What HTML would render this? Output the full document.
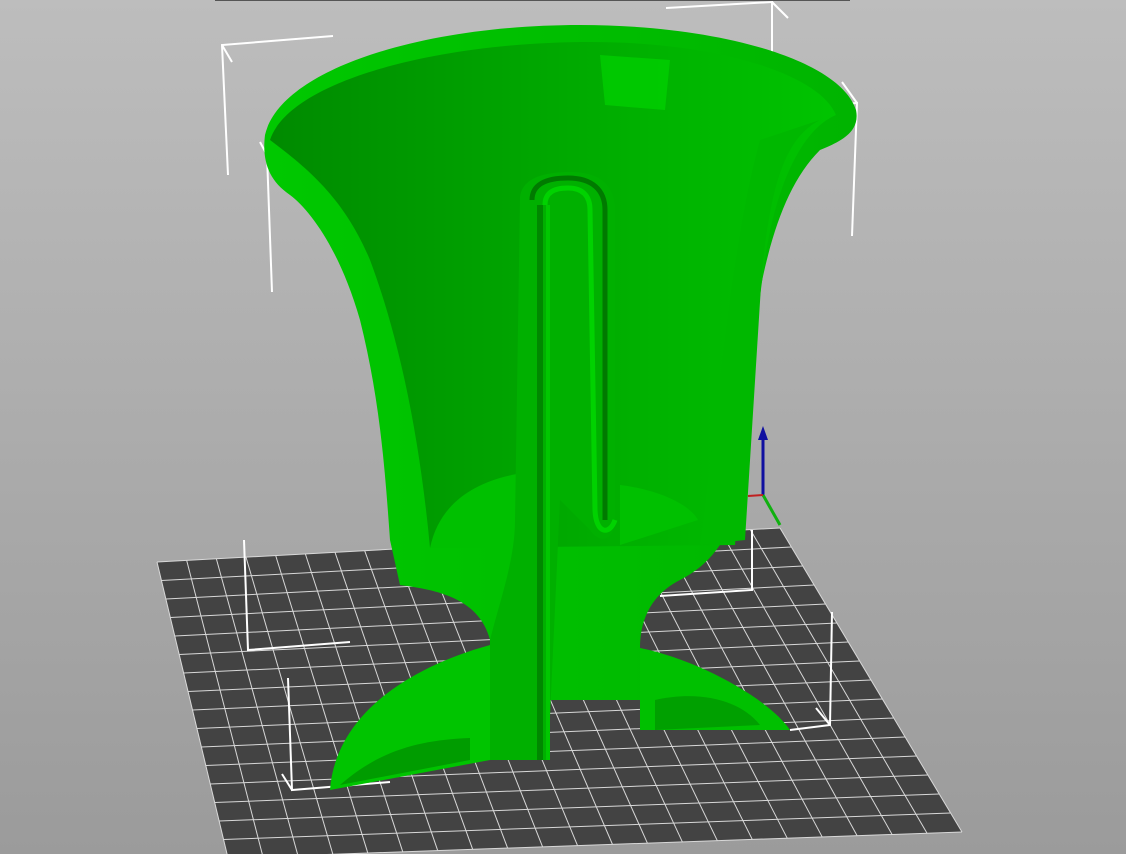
<!DOCTYPE html>
<html><head><meta charset="utf-8"><style>
html,body{margin:0;padding:0;width:1126px;height:854px;overflow:hidden}
svg{display:block}
</style></head><body>
<svg width="1126" height="854" viewBox="0 0 1126 854" xmlns="http://www.w3.org/2000/svg">
<defs>
<linearGradient id="bg" x1="0" y1="0" x2="0" y2="1">
<stop offset="0" stop-color="#bdbdbd"/><stop offset="1" stop-color="#9b9b9b"/></linearGradient>
<linearGradient id="inner" x1="0" y1="0" x2="1" y2="0">
<stop offset="0" stop-color="#008a00"/><stop offset="0.5" stop-color="#00a800"/><stop offset="1" stop-color="#00c400"/></linearGradient>
<linearGradient id="outer" x1="0" y1="0" x2="1" y2="0">
<stop offset="0" stop-color="#00c800"/><stop offset="1" stop-color="#00b400"/></linearGradient>
</defs>
<rect width="1126" height="854" fill="url(#bg)"/>
<line x1="215" y1="0" x2="850" y2="0" stroke="#555" stroke-width="2"/>
<!-- bed -->
<polygon points="157,562 780,528 962,832 228,858" fill="#434343"/>
<g stroke="#d8d8d8" stroke-width="1" id="grid"></g>
<!-- back bounding box marks -->
<g stroke="#fff" stroke-width="2" fill="none">
<polyline points="228,175 222,45 333,36"/>
<line x1="222" y1="45" x2="232" y2="62"/>
<polyline points="666,8 772,2 772,60"/>
<line x1="772" y1="2" x2="788" y2="18"/>
<polyline points="272,292 267,155 388,146"/>
<line x1="267" y1="155" x2="260" y2="142"/>
<polyline points="744,112 857,103 852,236"/>
<line x1="857" y1="103" x2="842" y2="82"/>
<polyline points="244,540 248,650 350,642"/>
<polyline points="288,678 292,790 390,782"/>
<line x1="292" y1="790" x2="282" y2="774"/>
<polyline points="752,530 752,590 660,596"/>
<polyline points="832,612 830,725 790,730"/>
<line x1="830" y1="725" x2="816" y2="708"/>
</g>
<!-- base foot -->
<path d="M330,790 C335,720 400,670 490,645 L490,760 Z" fill="#00c400"/>
<path d="M340,785 C380,750 420,740 470,738 L470,760 Z" fill="#009c00"/>
<path d="M640,648 C700,660 770,700 790,730 L640,730 Z" fill="#00c000"/>
<path d="M655,700 C700,690 740,700 760,725 L655,730 Z" fill="#00a000"/>
<!-- upper vase outer -->
<path d="M265,135 C280,70 420,25 580,25 C720,25 840,60 856,110 C860,130 845,140 820,150 C770,200 755,300 742,420 L742,470 C740,520 720,560 680,580 C660,590 640,610 640,648 L640,700 L490,700 L490,640 C480,600 440,590 400,585 L390,540 C385,470 380,400 360,320 C340,250 310,210 290,195 C268,180 262,160 265,135 Z" fill="url(#outer)"/>
<!-- inner bowl -->
<path d="M270,140 C290,80 440,42 590,42 C720,42 820,75 836,115 C800,130 775,190 765,260 C755,330 745,420 735,545 L430,548 C420,440 400,340 370,260 C345,200 310,170 270,140 Z" fill="url(#inner)"/>
<path d="M600,55 L670,60 L665,110 L605,105 Z" fill="#00d800" opacity="0.6"/>
<path d="M820,120 C780,140 770,200 762,270 L745,540 L700,545 C720,400 730,250 760,140 Z" fill="#00b800"/>
<!-- inner floor -->
<path d="M430,548 C440,500 480,478 530,472 L530,548 Z" fill="#00c000"/>
<path d="M620,485 C660,490 690,505 698,520 L620,545 Z" fill="#00c000"/>
<!-- central spine -->
<path d="M520,200 C520,180 540,172 570,172 C600,172 615,185 615,210 L615,520 C615,540 600,545 590,530 L560,500 L548,760 L490,760 L490,640 C500,600 515,560 515,520 Z" fill="#00b000"/>
<path d="M532,200 C532,185 545,178 568,178 C592,178 605,190 605,210 L605,520" stroke="#007a00" stroke-width="5" fill="none"/>
<path d="M545,205 C545,192 555,188 568,188 C582,188 590,195 590,210 L595,510 C596,535 610,535 615,520" stroke="#00d200" stroke-width="5" fill="none"/>
<path d="M540,205 L540,760" stroke="#008800" stroke-width="6"/>
<path d="M548,205 L548,760" stroke="#00c800" stroke-width="4"/>
<!-- axes -->
<line x1="763" y1="495" x2="763" y2="435" stroke="#1010a0" stroke-width="3"/>
<polygon points="758,440 763,426 768,440" fill="#1010a0"/>
<line x1="763" y1="495" x2="780" y2="525" stroke="#10b010" stroke-width="3"/>
<line x1="763" y1="495" x2="748" y2="496" stroke="#c02020" stroke-width="2"/>
</svg>
<script>
(function(){
var g=document.getElementById('grid');
var TL=[157,562],TR=[780,528],BR=[962,832],BL=[228,858];
function L(a,b,t){return [a[0]+(b[0]-a[0])*t,a[1]+(b[1]-a[1])*t];}
var s='';
var nc=21,nr=16;
for(var i=0;i<=nc;i++){var t=i/nc,p=L(TL,TR,t),q=L(BL,BR,t);s+='<line x1="'+p[0]+'" y1="'+p[1]+'" x2="'+q[0]+'" y2="'+q[1]+'"/>';}
for(var j=0;j<=nr;j++){var t=j/nr,p=L(TL,BL,t),q=L(TR,BR,t);s+='<line x1="'+p[0]+'" y1="'+p[1]+'" x2="'+q[0]+'" y2="'+q[1]+'"/>';}
g.innerHTML=s;
})();
</script>
</body></html>
